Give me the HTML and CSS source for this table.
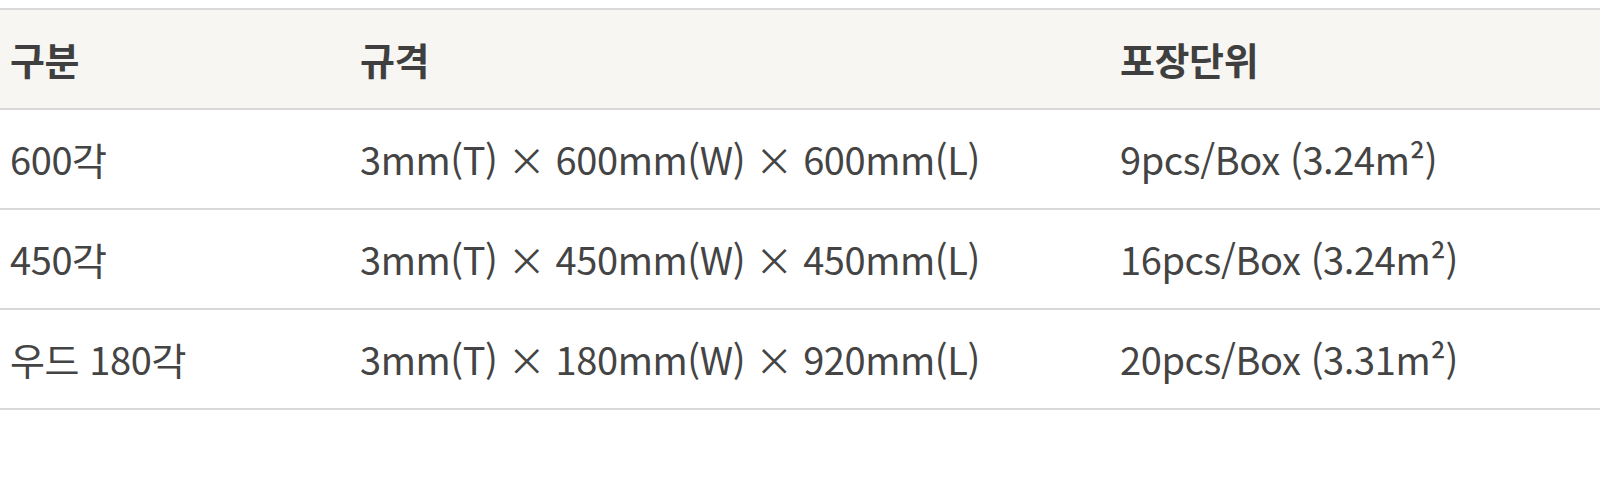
FILE: index.html
```html
<!DOCTYPE html>
<html lang="ko">
<head>
<meta charset="utf-8">
<link rel="stylesheet" href="styles.css">
</head>
<body>
<table class="spec">
  <colgroup>
    <col class="c1">
    <col class="c2">
    <col class="c3">
  </colgroup>
  <thead>
    <tr><th>구분</th><th>규격</th><th>포장단위</th></tr>
  </thead>
  <tbody>
    <tr><td>600각</td><td>3mm(T) × 600mm(W) × 600mm(L)</td><td>9pcs/Box (3.24m²)</td></tr>
    <tr><td>450각</td><td>3mm(T) × 450mm(W) × 450mm(L)</td><td>16pcs/Box (3.24m²)</td></tr>
    <tr><td>우드 180각</td><td>3mm(T) × 180mm(W) × 920mm(L)</td><td>20pcs/Box (3.31m²)</td></tr>
  </tbody>
</table>
</body>
</html>
```
FILE: styles.css
```css
html, body {
  margin: 0;
  padding: 0;
  background: #ffffff;
}
body {
  padding-top: 8px;
  font-family: "Noto Sans CJK KR", "Noto Sans", sans-serif;
}
.spec {
  width: 1600px;
  border-collapse: collapse;
  table-layout: fixed;
  border-top: 2px solid #d9d9d9;
}
.c1 { width: 360px; }
.c2 { width: 760px; }
.c3 { width: 480px; }
.spec th,
.spec td {
  text-align: left;
  padding: 0;
  border-bottom: 2px solid #d9d9d9;
  color: #444444;
  font-size: 38px;
  letter-spacing: -0.4px;
  line-height: 1;
}
.spec th:first-child,
.spec td:first-child {
  padding-left: 10px;
}
.spec th {
  height: 98px;
  background: #f7f6f3;
  font-weight: 700;
  color: #3f3f3f;
}
.spec td {
  height: 98px;
  font-weight: 400;
}
```
